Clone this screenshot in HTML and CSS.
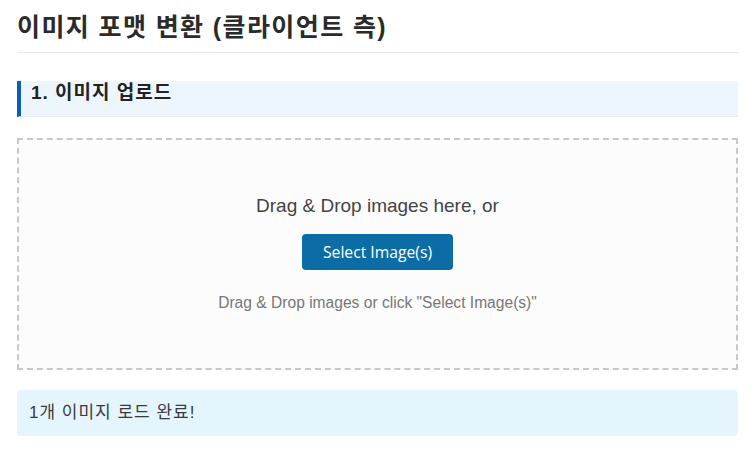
FILE: index.html
```html
<!DOCTYPE html>
<html lang="ko">
<head>
<meta charset="utf-8">
<title>이미지 포맷 변환</title>
<link rel="stylesheet" href="styles.css">
</head>
<body>
<main class="page">
  <h1 class="title">이미지 포맷 변환 (클라이언트 측)</h1>
  <section class="section">
    <h2 class="section-head">1. 이미지 업로드</h2>
    <div class="dropzone">
      <p class="drop-lead">Drag &amp; Drop images here, or</p>
      <button class="btn" type="button">Select Image(s)</button>
      <p class="drop-hint">Drag &amp; Drop images or click "Select Image(s)"</p>
    </div>
    <div class="status">1개 이미지 로드 완료!</div>
  </section>
</main>
</body>
</html>
```

FILE: styles.css
```css
* { box-sizing: border-box; }
html, body { margin: 0; background: #ffffff; }
body {
  font-family: "Liberation Sans", Arial, "Noto Sans CJK KR", sans-serif;
  color: #333;
}
.page {
  width: 738px;
  padding: 12px 0 0 17px;
}
.title {
  margin: 0;
  font-size: 25px;
  line-height: 30px;
  letter-spacing: 1.4px;
  font-weight: bold;
  color: #2b2b2b;
  padding-bottom: 10px;
  border-bottom: 1px solid #e6e6e6;
}
.section { margin-top: 28px; }
.section-head {
  margin: 0;
  height: 36px;
  font-size: 19px;
  line-height: 24px;
  letter-spacing: 1px;
  font-weight: bold;
  color: #222;
  background: #eef6fd;
  border-left: 4px solid #0d5cc0;
  border-bottom: 1px solid #e3edf6;
  padding: 0 10px 0 10px;
}
.dropzone {
  margin-top: 21px;
  height: 232px;
  border: 2px dashed #c8c8c8;
  background: #fcfcfc;
  padding-top: 54px;
  display: flex;
  flex-direction: column;
  align-items: center;
}
.drop-lead {
  margin: 0;
  font-size: 19px;
  line-height: 24px;
  color: #444;
}
.btn {
  margin-top: 16px;
  height: 36px;
  padding: 0 21px;
  border: none;
  border-radius: 4px;
  background: #0b6ca6;
  color: #fff;
  font-family: "Open Sans", "Noto Sans", sans-serif;
  font-size: 15.7px;
  cursor: pointer;
}
.drop-hint {
  margin: 23px 0 0;
  font-size: 15.6px;
  line-height: 20px;
  color: #777;
}
.status {
  margin-top: 20px;
  height: 46px;
  background: #e5f5fd;
  border-radius: 4px;
  padding: 12px 12px;
  font-size: 17px;
  line-height: 22px;
  letter-spacing: 1px;
  color: #3a3a3a;
}
```
